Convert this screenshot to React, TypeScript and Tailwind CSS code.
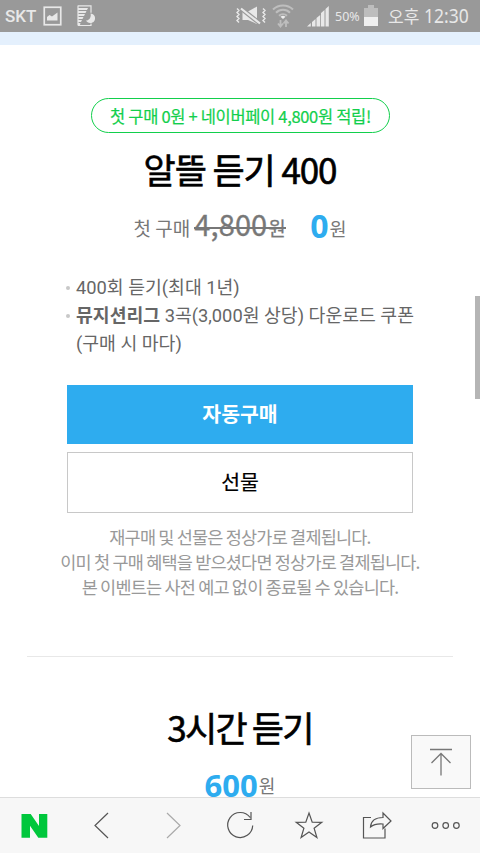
import React from 'react';

const TITLE = "font-['Noto_Sans_CJK_KR',sans-serif] font-normal text-black whitespace-nowrap [-webkit-text-stroke:0.6px_#000]";

const StatusBar: React.FC = () => (
  <header className="flex h-8 shrink-0 items-center justify-between bg-[#999] text-[#e8e8e8]">
    <div className="flex items-center pl-[5px]">
      <span className="w-[38px] font-['Roboto',sans-serif] text-[17px] leading-8 font-medium">SKT</span>
      <svg width="20" height="20" viewBox="0 0 20 20" className="shrink-0">
        <rect x="1.25" y="1.25" width="16.5" height="17.5" fill="none" stroke="currentColor" strokeWidth="1.7" />
        <path d="M4 14.500V11l2.500-2 2.500 1.500 5.500-4v8z" fill="currentColor" />
      </svg>
      {/* page with a crescent over its right edge */}
      <svg width="18" height="22" viewBox="0 0 18 22" className="ml-[14px] shrink-0">
        <path d="M1 .800h13v7M1 20.500h13v-2M1 .5v20" fill="none" stroke="currentColor" strokeWidth="1.2" />
        <path d="M1 3h10l-1 2H1zM1 6h8.500l-1 2H1zM1 9h7l-1 2H1zM1 12h5.500l-1 2H1zM1 15h4l-1 2H1zM1 18h2.500L3 20H1z" fill="currentColor" />
        <path d="M13.500 8.500A4.800 4.800 0 1 1 9 15.500c3 .3 5.500-3 4.500-7z" fill="currentColor" />
      </svg>
    </div>
    <div className="flex items-center">
      <svg width="31" height="22" viewBox="0 0 31 22" className="shrink-0">
        <path d="M2 3.500l2 2-2 2 2 2-2 2 2 2-2 2 2 2M28 3.500l2 2-2 2 2 2-2 2 2 2-2 2 2 2" fill="none" stroke="currentColor" strokeWidth="1.4" />
        <path d="M7.500 6.500H13L22 1.500v17.500L13 15H7.500z" fill="currentColor" />
        <path d="M6 3.500l19 15" stroke="#999" strokeWidth="4.400" />
        <path d="M6 3.500l19 15" stroke="currentColor" strokeWidth="2.200" />
      </svg>
      <svg width="24" height="24" viewBox="0 0 24 24" className="ml-[5px] mr-px shrink-0 text-[#bebebe]">
        <path d="M2 5.500a14.500 14.500 0 0 1 20 0M5 8.700a10 10 0 0 1 14 0M8 11.700a6 6 0 0 1 8 0" fill="none" stroke="currentColor" strokeWidth="2" />
        <path d="M9.500 12.800a4 4 0 0 1 5 0L12 15z" fill="#eee" />
        <path d="M9.500 16v6.500M7 19.500l2.500 3 2.500-3M15 23v-6.500M12.500 19.500l2.500-3 2.500 3" fill="none" stroke="currentColor" strokeWidth="1.800" />
      </svg>
      <svg width="23" height="22" viewBox="0 0 23 22" className="ml-[10px] shrink-0" fill="currentColor">
        <path d="M1 21.500l3.800-3.500v3.500zM6 17l3.500-3v7.500H6zM10.500 13l3.700-3v11.500h-3.700zM15 8l3.500-3v16.500H15zM19.500 4L22.800 1v20.500h-3.300z" />
      </svg>
      <span className="ml-[6px] w-[29px] origin-left scale-x-[0.96] font-['Noto_Sans',sans-serif] text-[13px] leading-8">50%</span>
      <svg width="14" height="22" viewBox="0 0 14 22" className="shrink-0">
        <path d="M4 0h6v3h4v9H0V3h4z" fill="#bdbdbd" />
        <path d="M0 12h14v9H0z" fill="#efefef" />
      </svg>
      <span className="ml-[10px] w-[36px] whitespace-nowrap font-['Noto_Sans_CJK_KR',sans-serif] text-[17px] leading-8">오후</span>
      <span className="w-[56px] origin-left scale-x-[0.92] whitespace-nowrap font-['Noto_Sans',sans-serif] text-[19px] leading-8">12:30</span>
    </div>
  </header>
);

const Toolbar: React.FC = () => (
  <nav className="relative flex h-14 shrink-0 border-t border-[#ddd] bg-[#f7f7f7] text-[#555]">
    <svg width="480" height="55" viewBox="0 797.5 480 55" fill="none" stroke="currentColor" strokeWidth="1.2">
      <path d="M21.500 813.500h9.200l8.300 12V813.500h8.300v23.700h-9l-8.300-12V837.200h-8.500z" fill="#00c73c" stroke="none" />
      <path d="M108 812.500l-13 12.500 13 12.500" />
      <path d="M167 812.500l13 12.500-13 12.500" stroke="#aaa" />
      <path d="M252.700 825a12.500 12.500 0 1 1-2.500-8M251 811.500v7.500h-7" />
      <path d="M309 812.500l3.200 9.100 9.600.2-7.700 5.900 2.800 9.300-7.900-5.600-7.900 5.600 2.800-9.300-7.700-5.900 9.600-.2z" />
      <path d="M371 817h-7.500v20.500H385V828M370.500 826.500c.5-6.500 5-9.500 12.500-9.500v-4.500l8 8-8 7.500v-4.500c-6-.5-9.500.500-12.500 3z" />
      <circle cx="435" cy="825" r="2.800" />
      <circle cx="445.700" cy="825" r="2.800" />
      <circle cx="456.400" cy="825" r="2.800" />
    </svg>
  </nav>
);

const App: React.FC = () => {
  return (
    <div className="relative flex h-[853px] w-[480px] flex-col overflow-hidden bg-white font-['Roboto','Noto_Sans_CJK_KR',sans-serif] text-[#666]">
      <StatusBar />
      <div className="h-[13px] shrink-0 bg-[#e4f0fd]" />

      <main className="flex min-h-0 flex-1 flex-col">
        <section className="flex shrink-0 flex-col items-center pt-[53px]">
          <div className="flex h-[35px] w-[299px] items-center justify-center rounded-full border-[1.5px] border-[#12cf4c] pt-px pl-px font-['Noto_Sans_CJK_KR',sans-serif] text-[16.5px] tracking-[-0.32px] whitespace-nowrap text-[#12cf4c] [-webkit-text-stroke:0.2px_#12cf4c]">
            첫 구매 0원 + 네이버페이 4,800원 적립!
          </div>
          <h2 className={`${TITLE} mt-[10px] h-[52px] text-[35px] leading-[52px] tracking-[-1.1px]`}>알뜰 듣기 400</h2>
          <div className="mt-[8px] flex h-10 w-[213px] items-baseline font-['Noto_Sans_CJK_KR',sans-serif] leading-10 whitespace-nowrap text-[#777]">
            <span className="w-[61px] text-[19px]">첫 구매</span>
            <span className="relative flex w-[92px] items-baseline text-[29px] tracking-[0.1px] [-webkit-text-stroke:0.3px_#777]">
              4,800<span className="ml-px text-[19px]">원</span>
              <span className="absolute top-[24px] left-0 h-[2px] w-[92px] bg-[#777]" />
            </span>
            <b className="relative top-[2px] ml-[24px] font-['Noto_Sans',sans-serif] text-[32px]">
              <span className="text-[#2eacef]">0</span>
            </b>
            <span className="ml-[1px] text-[18.5px]">원</span>
          </div>
        </section>

        <ul className="ml-[66px] mt-[31px] shrink-0 text-[18.3px] leading-7 whitespace-nowrap">
          <li className="flex items-center gap-[6px]">
            <i className="h-1 w-1 rounded-full bg-[#c8c8c8]" />
            <span>400회 듣기(최대 1년)</span>
          </li>
          <li className="flex items-center gap-[6px]">
            <i className="h-1 w-1 rounded-full bg-[#c8c8c8]" />
            <span><b className="font-bold">뮤지션리그</b> 3곡(3,000원 상당) 다운로드 쿠폰</span>
          </li>
          <li className="pl-[10px]">(구매 시 마다)</li>
        </ul>

        <div className="mx-auto mt-[27px] flex w-[346px] shrink-0 flex-col gap-2 font-['Noto_Sans_CJK_KR',sans-serif] text-[20.5px]">
          <button className="h-[59px] bg-[#2eacef] pb-[2px] font-bold text-white">자동구매</button>
          <button className="h-[61px] border border-[#c8c8c8] bg-white pb-[2px] text-black [-webkit-text-stroke:0.2px_#000]">선물</button>
        </div>

        <div className="mt-[11px] shrink-0 text-center font-['Noto_Sans_CJK_KR',sans-serif] text-[17.5px] leading-[25px] tracking-[-0.8px] whitespace-nowrap text-[#999]">
          <p>재구매 및 선물은 정상가로 결제됩니다.</p>
          <p>이미 첫 구매 혜택을 받으셨다면 정상가로 결제됩니다.</p>
          <p>본 이벤트는 사전 예고 없이 종료될 수 있습니다.</p>
        </div>

        <hr className="mx-[27px] mt-[57px] shrink-0 border-[#e8e8e8]" />

        <section className="flex shrink-0 flex-col items-center pt-[44px]">
          <h2 className={`${TITLE} h-[52px] text-[35px] leading-[52px] tracking-[-1.8px]`}>3시간 듣기</h2>
          <div className="mt-[20px] flex h-[24px] items-center leading-[24px] text-[#777]">
            <b className="font-['Noto_Sans',sans-serif] text-[31px] text-[#2eacef]">600</b>
            <span className="ml-[1px] font-['Noto_Sans_CJK_KR',sans-serif] text-[18px]">원</span>
          </div>
        </section>
      </main>

      <Toolbar />

      {/* scroll thumb */}
      <div className="absolute top-[296px] right-0 h-[103px] w-[5px] bg-[#b5b5b5]" />

      {/* back to top */}
      <button className="absolute top-[735px] left-[411px] flex h-[54px] w-[60px] items-center justify-center border border-[#bbb] bg-[#f9f9f9]/95">
        <svg width="22" height="28" viewBox="0 0 22 28" fill="none" stroke="#777" strokeWidth="1.3">
          <path d="M0 1.500h22M11 27.500V5.500M1.500 15L11 5.500l9.500 9.500" />
        </svg>
      </button>
    </div>
  );
};

export default App;
